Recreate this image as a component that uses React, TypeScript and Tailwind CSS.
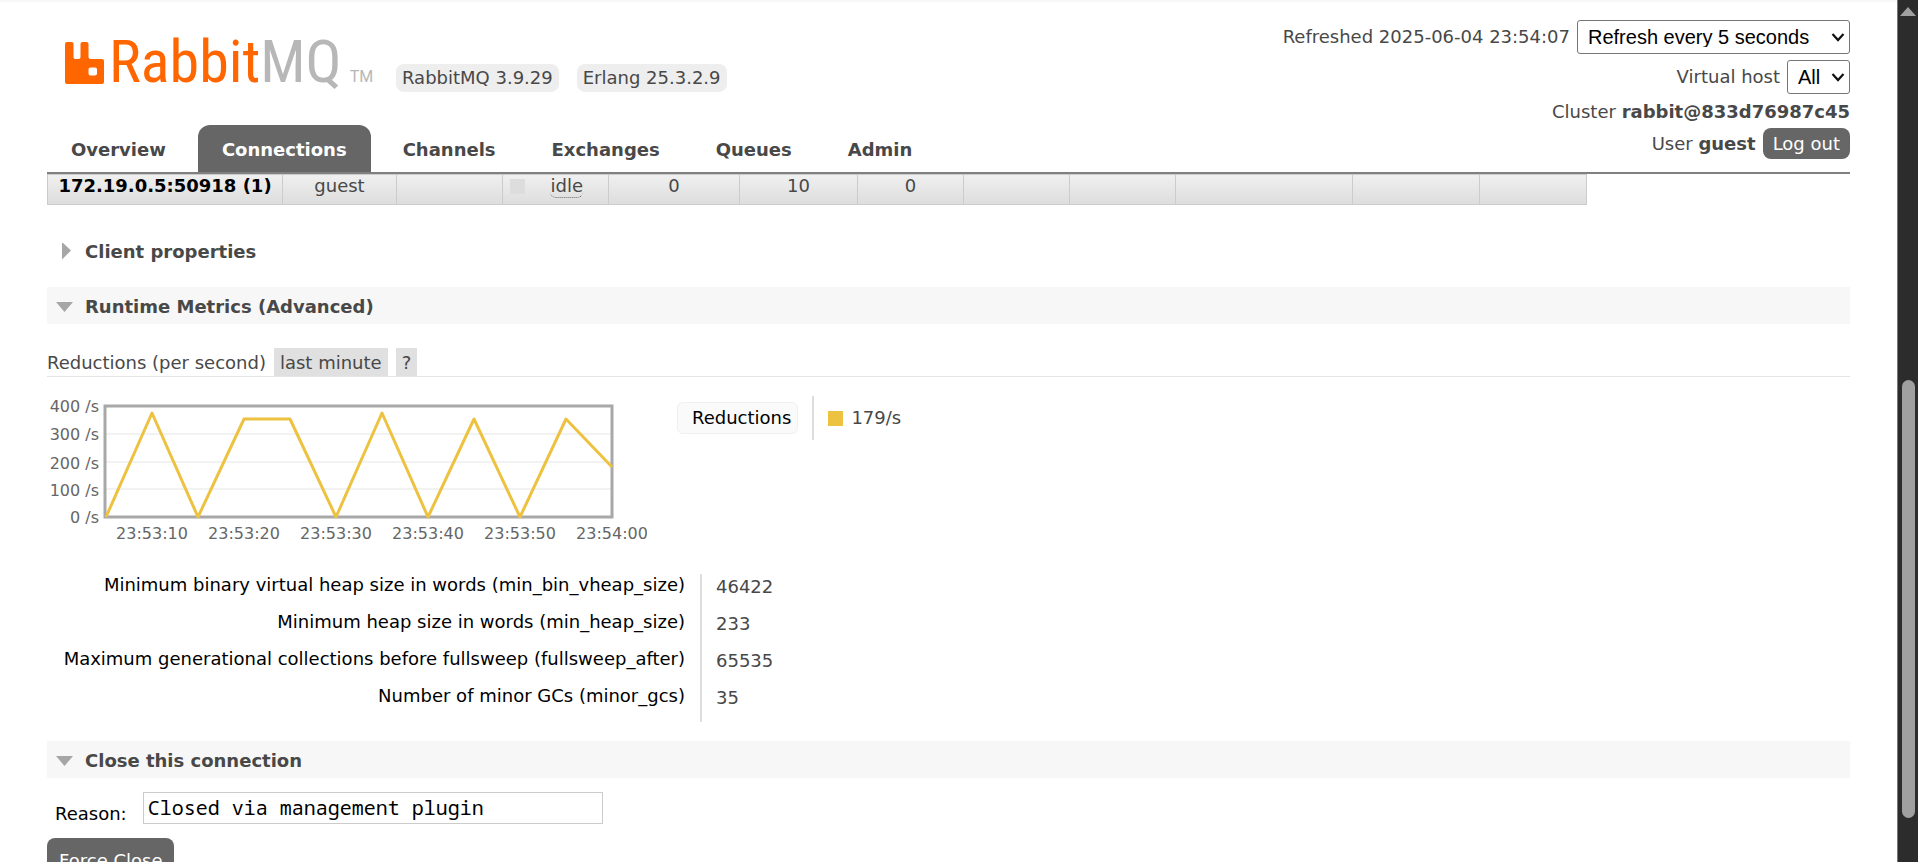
import type { ReactNode } from "react";

const tabs = ["Overview", "Connections", "Channels", "Exchanges", "Queues", "Admin"];

const metrics = [
  ["Minimum binary virtual heap size in words (min_bin_vheap_size)", "46422"],
  ["Minimum heap size in words (min_heap_size)", "233"],
  ["Maximum generational collections before fullsweep (fullsweep_after)", "65535"],
  ["Number of minor GCs (minor_gcs)", "35"],
];

function Logo() {
  return (
    <a href="#/" aria-label="RabbitMQ" className="flex h-[59px] w-[308px] items-start gap-1 whitespace-nowrap">
      <svg viewBox="0 0 40 42" className="mt-[9px] h-[42px] w-[40px] shrink-0" aria-hidden="true">
        <path
          fill="#ff6600"
          fillRule="evenodd"
          d="M2 0H6.500Q8.500 0 8.500 2V15Q8.500 17 10.500 17H13.500Q15.500 17 15.500 15V2Q15.500 0 17.500 0H21.500Q23.500 0 23.500 2V15Q23.500 17 25.500 17H37Q39 17 39 19V40Q39 42 37 42H2Q0 42 0 40V2Q0 0 2 0ZM25.500 25.500Q23.500 25.500 23.500 27.500V31.500Q23.500 33.500 25.500 33.500H30Q32 33.500 32 31.500V27.500Q32 25.500 30 25.500Z"
        />
      </svg>
      <span className="flex items-baseline font-['Roboto_Condensed','Roboto',sans-serif] text-[60px] leading-[58px]">
        <span className="text-[#ff6600]">Rabbit</span>
        <span className="text-[#b7b7b7]">MQ</span>
        <span className="ml-2 font-['Roboto',sans-serif] text-[16px] leading-none text-[#b7b7b7]">TM</span>
      </span>
    </a>
  );
}

function Select({ id, value, className }: { id: string; value: string; className: string }) {
  return (
    <span className="relative flex">
      <select
        id={id}
        className={
          "h-[34px] appearance-none rounded-[3px] border border-[#767676] bg-white pl-2.5 font-['Liberation_Sans',sans-serif] text-[20px] leading-none text-black " +
          className
        }
      >
        <option>{value}</option>
      </select>
      <svg viewBox="0 0 14 10" className="pointer-events-none absolute right-[5px] top-3 h-2.5 w-3.5" aria-hidden="true">
        <path d="M1.500 2L7 8L12.500 2" fill="none" stroke="#111" strokeWidth="2.200" />
      </svg>
    </span>
  );
}

function SectionTitle({ open, children }: { open: boolean; children: ReactNode }) {
  return (
    <h2 className={open ? "bg-[#f7f7f7]" : ""}>
      <button type="button" className="flex h-[37px] w-full items-center pt-0.5 text-left font-bold">
        <span className="flex w-[38px] pl-2">
          <svg viewBox="0 0 18 18" className="size-[18px]" aria-hidden="true">
            <path d={open ? "M1 4H18L9.500 14Z" : "M7 -1L16 7.500L7 16.500Z"} fill="#a6a6a6" />
          </svg>
        </span>
        {children}
      </button>
    </h2>
  );
}

function Chart() {
  const y = [110, 6, 110, 12, 12, 110, 6, 110, 12, 110, 12, 60];
  const points = y.map((v, i) => `${1 + i * 46},${v + 2}`).join(" ");
  return (
    <svg width="600" height="152" viewBox="0 0 600 152" className="block" role="img" aria-label="Reductions per second">
      <g transform="translate(58,10)">
        {[29, 57, 84].map((v) => (
          <path key={v} d={`M0 ${v}H508`} stroke="#f2f2f2" strokeWidth="2" />
        ))}
        <rect x="0" y="1" width="507" height="111" fill="none" stroke="#a8a8a8" strokeWidth="3" />
        <polyline points={points} fill="none" stroke="#edc240" strokeWidth="3" strokeLinejoin="round" />
      </g>
      <g fill="#666" fontSize="16" textAnchor="end" className="font-['DejaVu_Sans',sans-serif]">
        <text x="52" y="17">400 /s</text>
        <text x="52" y="45">300 /s</text>
        <text x="52" y="74">200 /s</text>
        <text x="52" y="101">100 /s</text>
        <text x="52" y="128">0 /s</text>
      </g>
      <g fill="#666" fontSize="16" textAnchor="middle" className="font-['DejaVu_Sans',sans-serif]">
        {["23:53:10", "23:53:20", "23:53:30", "23:53:40", "23:53:50", "23:54:00"].map((t, i) => (
          <text key={t} x={105 + i * 92} y="144">
            {t}
          </text>
        ))}
      </g>
    </svg>
  );
}

export default function App() {
  const cell = "border border-[#cccccc] px-1 text-center";
  return (
    <div className="flex h-screen overflow-hidden bg-white font-['DejaVu_Sans',sans-serif] text-[18px] leading-[22px] text-[#484848]">
      <div className="min-w-0 flex-1 border-t-2 border-[#f8f8f8] pl-[47px] pr-[47px]">
        <header className="flex justify-between border-b-2 border-[#808080]">
          <div className="flex flex-col justify-between pt-[31px]">
            <div className="flex items-end gap-[23px] pl-[18px]">
              <Logo />
              <div className="flex gap-[18px] whitespace-nowrap">
                <span className="rounded-lg bg-[#eeeeee] px-1.5 py-[3px]">RabbitMQ 3.9.29</span>
                <span className="rounded-lg bg-[#eeeeee] px-1.5 py-[3px]">Erlang 25.3.2.9</span>
              </div>
            </div>
            <nav className="flex gap-2">
              {tabs.map((t) => (
                <a
                  key={t}
                  href={"#/" + t.toLowerCase()}
                  className={
                    t === "Connections"
                      ? "rounded-t-xl bg-[#666666] px-6 pb-[11px] pt-3.5 font-bold text-white"
                      : "px-6 pb-[11px] pt-3.5 font-bold"
                  }
                >
                  {t}
                </a>
              ))}
            </nav>
          </div>
          <div className="flex flex-col items-end pb-[13px] pt-[18px]">
            <div className="flex items-center gap-[7px]">
              <label htmlFor="refresh">Refreshed 2025-06-04 23:54:07</label>
              <Select id="refresh" value="Refresh every 5 seconds" className="w-[273px]" />
            </div>
            <div className="mt-1.5 flex items-center gap-[7px]">
              <label htmlFor="vhost">Virtual host</label>
              <Select id="vhost" value="All" className="w-[63px]" />
            </div>
            <p className="mt-[7px]">
              Cluster <b>rabbit@833d76987c45</b>
            </p>
            <div className="mt-[5px] flex items-center gap-[7px]">
              <span>
                User <b>guest</b>
              </span>
              <button type="button" className="h-[31px] rounded-lg bg-[#666666] px-2.5 text-white">
                Log out
              </button>
            </div>
          </div>
        </header>

        <main>
          <table className="h-[31px] w-[1539px] table-fixed border-collapse bg-linear-to-b from-[#f0f0f0] to-[#dddddd]">
            <colgroup>
              <col className="w-[235px]" />
              <col className="w-[114px]" />
              <col className="w-[106px]" />
              <col className="w-[106px]" />
              <col className="w-[131px]" />
              <col className="w-[118px]" />
              <col className="w-[106px]" />
              <col className="w-[106px]" />
              <col className="w-[106px]" />
              <col className="w-[177px]" />
              <col className="w-[127px]" />
              <col className="w-[107px]" />
            </colgroup>
            <tbody>
              <tr className="align-top">
                <td className={cell + " whitespace-nowrap"}>
                  <a href="#/connections" className="font-bold text-black">
                    172.19.0.5:50918 (1)
                  </a>
                </td>
                <td className={cell}>guest</td>
                <td className={cell} />
                <td className="border border-[#cccccc] px-[7px]">
                  <div className="flex items-start justify-between pr-[18px]">
                    <span className="mt-1 size-[15px] bg-[#dddddd]" />
                    <abbr title="idle" className="rounded-md border-b border-dotted border-[#666666] no-underline">
                      idle
                    </abbr>
                  </div>
                </td>
                <td className={cell}>0</td>
                <td className={cell}>10</td>
                <td className={cell}>0</td>
                <td className={cell} />
                <td className={cell} />
                <td className={cell} />
                <td className={cell} />
                <td className={cell} />
              </tr>
            </tbody>
          </table>

          <div className="mt-[27px]">
            <SectionTitle open={false}>Client properties</SectionTitle>
          </div>
          <div className="mt-[18px]">
            <SectionTitle open>Runtime Metrics (Advanced)</SectionTitle>
          </div>

          <h3 className="mt-6 flex items-end gap-2 border-b border-[#e4e4e4]">
            <span className="pb-0.5">Reductions (per second)</span>
            <button type="button" className="bg-[#e0e0e0] px-1.5 pb-0.5 pt-1">
              last minute
            </button>
            <button type="button" className="bg-[#e0e0e0] px-1.5 pb-0.5 pt-1">
              ?
            </button>
          </h3>

          <div className="mt-[18px] flex items-start">
            <div className="w-[630px]">
              <Chart />
            </div>
            <div className="flex h-[46px] items-center">
              <button
                type="button"
                className="h-8 rounded-md border border-[#f0f0f0] bg-[#fafafa] pl-3.5 pr-1.5 text-black"
              >
                Reductions
              </button>
              <div className="ml-3.5 flex h-11 items-center gap-2 border-l-2 border-[#dddddd] pl-3.5">
                <span className="size-[15px] bg-[#edc240]" />
                179/s
              </div>
            </div>
          </div>

          <table className="mt-[27px] border-collapse">
            <tbody>
              {metrics.map(([name, value]) => (
                <tr key={name} className="h-[37px] align-top">
                  <th className="w-[654px] border-r-2 border-[#dddddd] pr-[15px] text-right font-normal text-black">
                    {name}
                  </th>
                  <td className="pl-3.5 pt-0.5">{value}</td>
                </tr>
              ))}
            </tbody>
          </table>

          <div className="mt-[19px]">
            <SectionTitle open>Close this connection</SectionTitle>
          </div>
          <form>
            <div className="mt-3.5 flex items-start gap-4 pl-2">
              <label htmlFor="reason" className="pt-[11px] text-black">
                Reason:
              </label>
              <input
                id="reason"
                type="text"
                defaultValue="Closed via management plugin"
                className="h-8 w-[460px] border border-[#cccccc] px-1 pb-0.5 font-['Noto_Sans_Mono','DejaVu_Sans_Mono',monospace] text-[20px] text-black"
              />
            </div>
            <button type="button" className="mt-[13px] h-[46px] rounded-lg bg-[#666666] px-3 text-white">
              Force Close
            </button>
          </form>
        </main>
      </div>
      <aside className="flex w-[21px] shrink-0 flex-col items-center border-l border-[#777777] bg-[#2c2c2c]">
        <svg viewBox="0 0 16 9" className="mt-[7px] h-[9px] w-4" aria-hidden="true">
          <path d="M8 0L16 9H0Z" fill="#a0a0a0" />
        </svg>
        <div className="min-h-0 flex-[364]" />
        <div className="min-h-0 w-[13px] flex-[438] rounded-full bg-[#a0a0a0]" />
        <div className="min-h-0 flex-[44]" />
      </aside>
    </div>
  );
}
